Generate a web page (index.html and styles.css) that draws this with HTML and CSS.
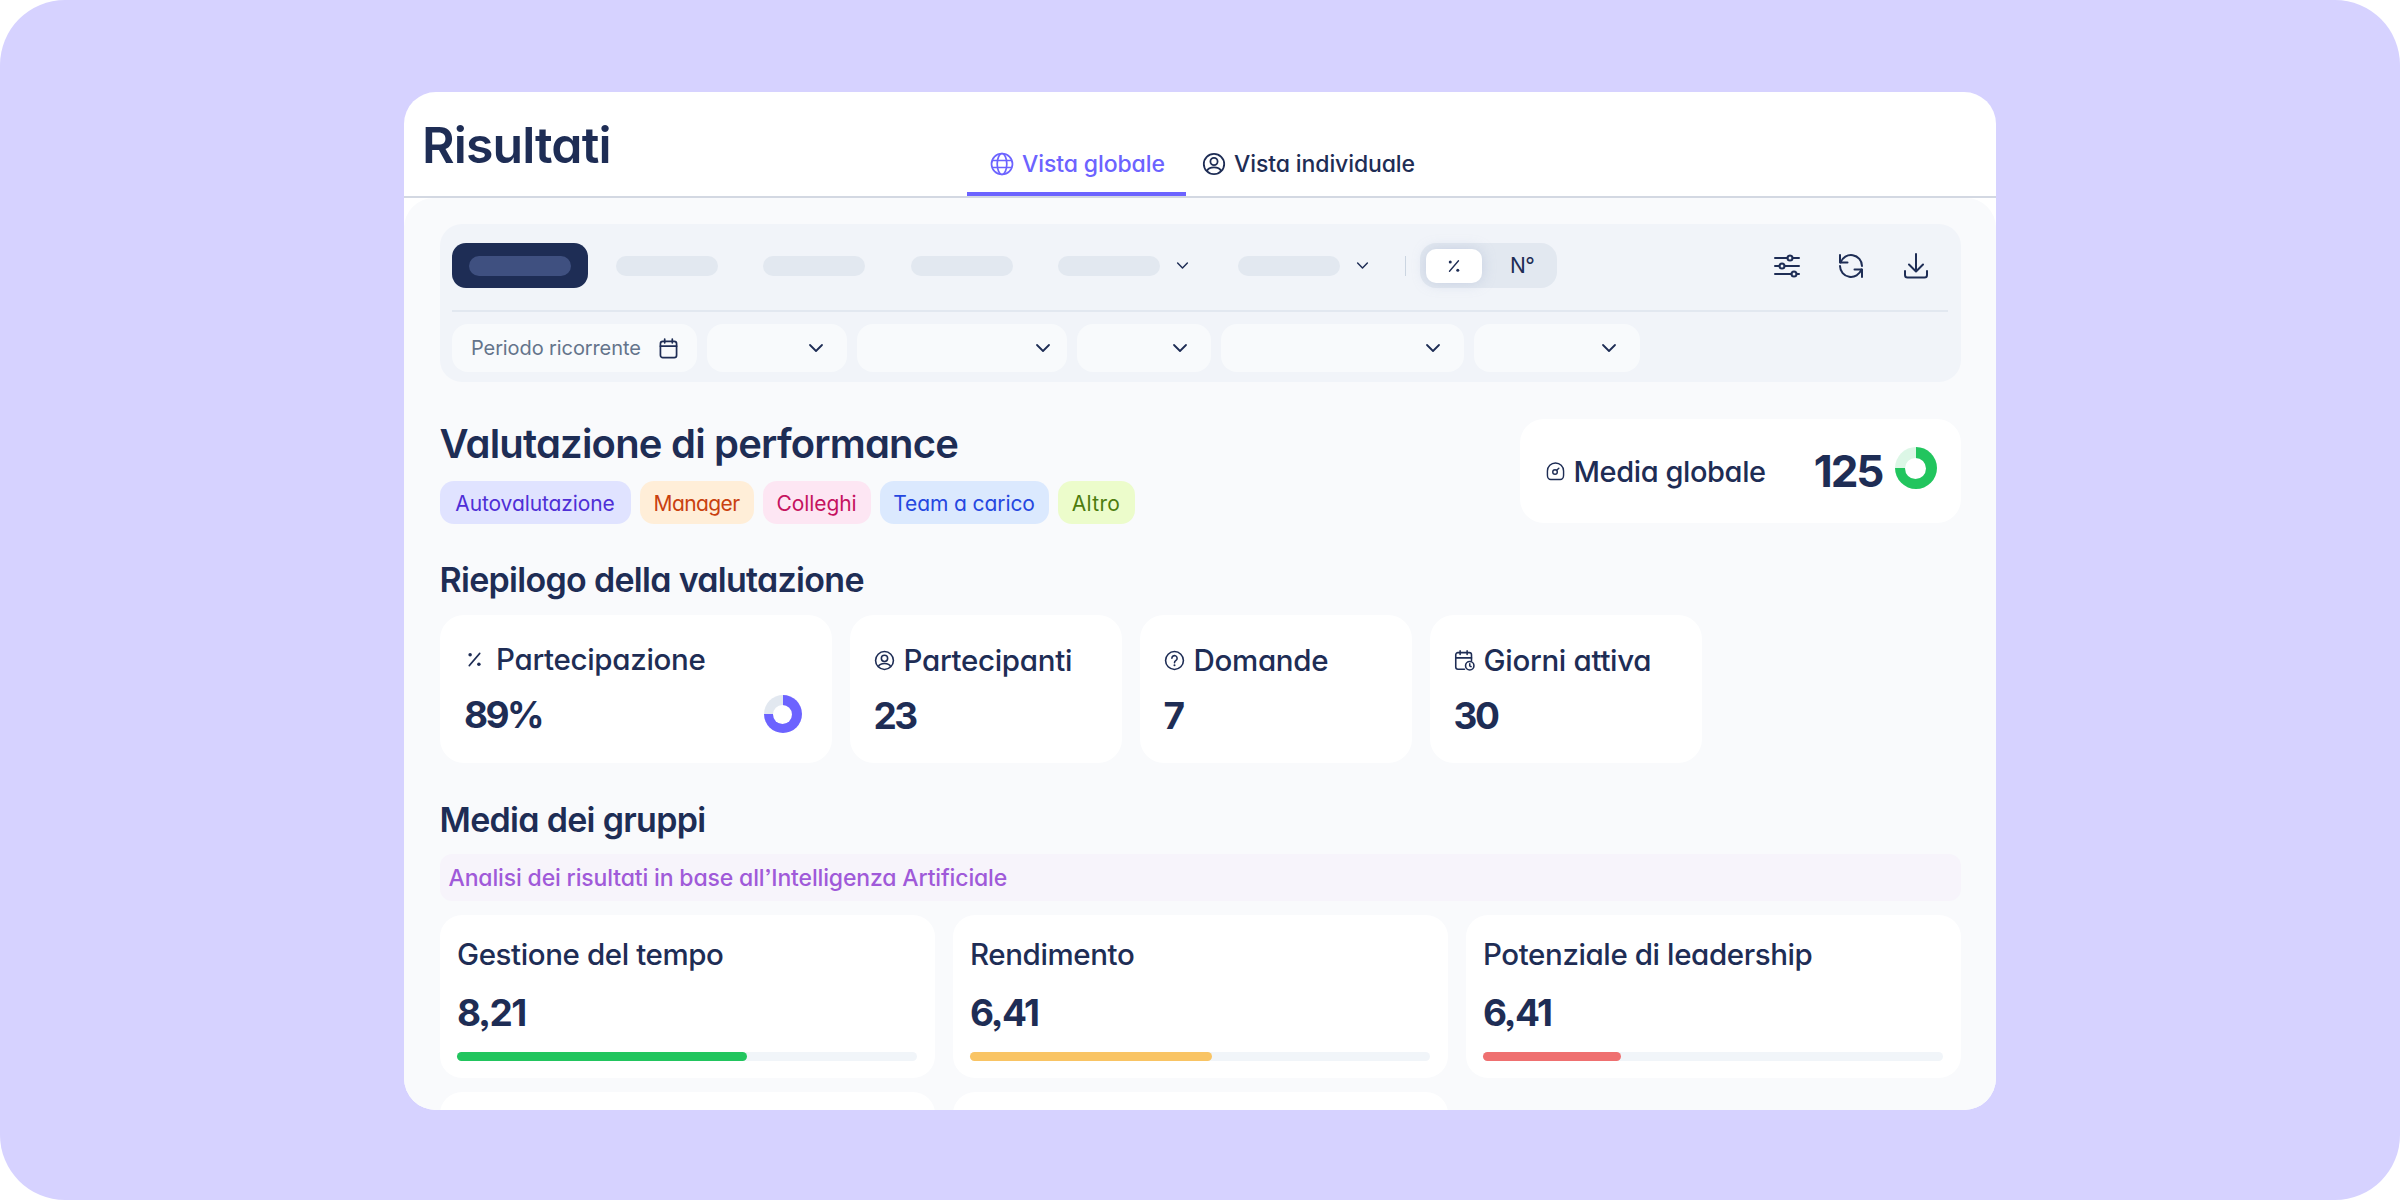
FILE: index.html
```html
<!DOCTYPE html>
<html lang="it">
<head>
<meta charset="utf-8">
<title>Risultati</title>
<link rel="stylesheet" href="styles.css">
</head>
<body>
<svg class="defs" width="0" height="0" aria-hidden="true">
  <symbol id="chev" viewBox="0 0 16 10"><path d="M2 2l6 6 6-6" fill="none" stroke="currentColor" stroke-width="1.8" stroke-linecap="round" stroke-linejoin="round"/></symbol>
  <symbol id="user" viewBox="0 0 24 24"><g fill="none" stroke="currentColor" stroke-width="1.8"><circle cx="12" cy="12" r="10.2"/><circle cx="12" cy="9.5" r="3.6"/><path d="M5 19c1-2.6 3.6-3.6 7-3.6s6 1 7 3.6"/></g></symbol>
  <symbol id="pct" viewBox="0 0 24 24"><path d="M18 5L6 19" stroke="currentColor" stroke-width="1.8" stroke-linecap="round"/><circle cx="7" cy="6.5" r="2" fill="currentColor"/><circle cx="17" cy="17.5" r="2" fill="currentColor"/></symbol>
</svg>
<main class="stage">
  <div class="window">
    <header class="top">
      <h1 class="page-title">Risultati</h1>
      <nav class="tabs">
        <a class="tab tab-active">
          <svg class="tab-icon" viewBox="0 0 24 24"><g fill="none" stroke="currentColor" stroke-width="1.7"><circle cx="12" cy="12" r="10.5"/><ellipse cx="12" cy="12" rx="4.8" ry="10.5"/><path d="M2.2 8.5h19.6M2.2 15.5h19.6"/></g></svg>
          Vista globale
        </a>
        <a class="tab tab-next">
          <svg class="tab-icon"><use href="#user"/></svg>
          Vista individuale
        </a>
      </nav>
    </header>
    <section class="content">
      <div class="panel">
        <div class="row-one">
          <div class="btn-dark"><span class="ph ph-dark"></span></div>
          <div class="seg"><span class="ph"></span></div>
          <div class="seg"><span class="ph"></span></div>
          <div class="seg"><span class="ph"></span></div>
          <div class="seg seg-wide"><span class="ph"></span><svg class="chev-s"><use href="#chev"/></svg></div>
          <div class="seg seg-last"><span class="ph"></span><svg class="chev-s"><use href="#chev"/></svg></div>
          <span class="vsep"></span>
          <div class="toggle">
            <span class="knob"><svg class="pct-icon"><use href="#pct"/></svg></span>
            <span class="toggle-n">N°</span>
          </div>
          <div class="tools">
            <svg class="tool" viewBox="0 0 26 26"><g fill="none" stroke="currentColor" stroke-width="2"><path d="M1 5h12.500M18.500 5h6.500M1 13h4.500M10.500 13h14.500M1 21h16.500M22.500 21h2.500" stroke-linecap="round"/><circle cx="16" cy="5" r="2.500"/><circle cx="8" cy="13" r="2.500"/><circle cx="20" cy="21" r="2.500"/></g></svg>
            <svg class="tool" viewBox="0 0 26 26"><g fill="none" stroke="currentColor" stroke-width="2" stroke-linecap="round" stroke-linejoin="round"><path d="M2.600 9.500A11 11 0 0 1 24 13"/><path d="M2 2v7.500h7.500"/><path d="M23.400 16.500A11 11 0 0 1 2 13"/><path d="M24 24v-7.500h-7.500"/></g></svg>
            <svg class="tool" viewBox="0 0 26 26"><g fill="none" stroke="currentColor" stroke-width="2" stroke-linecap="round" stroke-linejoin="round"><path d="M13 1v17M6 11.500l7 7 7-7"/><path d="M2 18v4a2.500 2.500 0 0 0 2.500 2.500h17A2.500 2.500 0 0 0 24 22v-4"/></g></svg>
          </div>
        </div>
        <div class="row-two">
          <div class="filter f-date">
            <span class="filter-text">Periodo ricorrente</span>
            <svg class="cal" viewBox="0 0 20 22"><g fill="none" stroke="currentColor" stroke-width="1.800" stroke-linecap="round"><rect x="1.500" y="3.500" width="17" height="17" rx="2.500"/><path d="M1.500 8.500h17M6 1v4M14 1v4"/></g></svg>
          </div>
          <div class="filter f-a"><svg class="chev"><use href="#chev"/></svg></div>
          <div class="filter f-b"><svg class="chev"><use href="#chev"/></svg></div>
          <div class="filter f-c"><svg class="chev"><use href="#chev"/></svg></div>
          <div class="filter f-d"><svg class="chev"><use href="#chev"/></svg></div>
          <div class="filter f-e"><svg class="chev"><use href="#chev"/></svg></div>
        </div>
      </div>

      <div class="eval-head">
        <div>
          <h2 class="eval-title">Valutazione di performance</h2>
          <div class="chips">
            <span class="chip chip-indigo">Autovalutazione</span>
            <span class="chip chip-orange">Manager</span>
            <span class="chip chip-pink">Colleghi</span>
            <span class="chip chip-blue">Team a carico</span>
            <span class="chip chip-lime">Altro</span>
          </div>
        </div>
        <div class="score">
          <svg class="score-icon" viewBox="0 0 20 20"><g fill="none" stroke="currentColor" stroke-width="1.500" stroke-linecap="round"><path d="M5 18.500h10c2 0 3.500-2 3.500-4.500V9.500a8.500 8.500 0 0 0-17 0V14c0 2.500 1.500 4.500 3.500 4.500z"/><circle cx="9.500" cy="10.500" r="2.400"/><path d="M11.500 8.500l2-2"/></g></svg>
          <span class="score-label">Media globale</span>
          <span class="score-value">125</span>
          <span class="donut donut-green"></span>
        </div>
      </div>

      <h2 class="section-title">Riepilogo della valutazione</h2>
      <div class="summary">
        <article class="stat stat-wide">
          <div class="stat-label stat-label-raised"><svg class="stat-icon"><use href="#pct"/></svg>Partecipazione</div>
          <div class="stat-foot"><span class="stat-value">89%</span><span class="donut donut-purple"></span></div>
        </article>
        <article class="stat">
          <div class="stat-label"><svg class="stat-icon"><use href="#user"/></svg>Partecipanti</div>
          <div class="stat-foot"><span class="stat-value">23</span></div>
        </article>
        <article class="stat">
          <div class="stat-label"><svg class="stat-icon" viewBox="0 0 24 24"><g fill="none" stroke="currentColor" stroke-width="1.800" stroke-linecap="round"><circle cx="12" cy="12" r="10.200"/><path d="M9 9.500a3 3 0 1 1 4.700 2.400c-1 .7-1.700 1.300-1.700 2.600"/></g><circle cx="12" cy="17.500" r="1.200" fill="currentColor"/></svg>Domande</div>
          <div class="stat-foot"><span class="stat-value">7</span></div>
        </article>
        <article class="stat">
          <div class="stat-label"><svg class="stat-icon" viewBox="0 0 24 24"><g fill="none" stroke="currentColor" stroke-width="1.800" stroke-linecap="round"><path d="M12 22H4.500A2.500 2.500 0 0 1 2 19.500v-14A2.500 2.500 0 0 1 4.500 3h13A2.500 2.500 0 0 1 20 5.500V12"/><path d="M2 9h18M7 1v4M15 1v4"/><circle cx="18" cy="18" r="4.800"/><path d="M18 15.800V18l1.500 1"/></g></svg>Giorni attiva</div>
          <div class="stat-foot"><span class="stat-value">30</span></div>
        </article>
      </div>

      <h2 class="section-title section-groups">Media dei gruppi</h2>
      <div class="ai-banner">Analisi dei risultati in base all’Intelligenza Artificiale</div>
      <div class="groups">
        <article class="group">
          <div class="group-label">Gestione del tempo</div>
          <div class="group-value">8,21</div>
          <div class="track"><div class="fill fill-green" style="width:63%"></div></div>
        </article>
        <article class="group">
          <div class="group-label">Rendimento</div>
          <div class="group-value">6,41</div>
          <div class="track"><div class="fill fill-yellow" style="width:52.600%"></div></div>
        </article>
        <article class="group">
          <div class="group-label">Potenziale di leadership</div>
          <div class="group-value">6,41</div>
          <div class="track"><div class="fill fill-red" style="width:30%"></div></div>
        </article>
        <article class="group"></article>
        <article class="group"></article>
      </div>
    </section>
  </div>
</main>
</body>
</html>
```

FILE: styles.css
```css
* { box-sizing: border-box; }
html, body { margin: 0; padding: 0; background: #fff; }
body {
  font-family: Inter, "Noto Sans", "Liberation Sans", sans-serif;
  font-feature-settings: "cv11" 1, "ss03" 1;
  color: #1e2d55;
}
.defs { position: absolute; }
h1, h2 { margin: 0; }
svg { display: block; flex: none; }

.stage {
  width: 2400px;
  height: 1200px;
  padding: 92px 404px 0 404px;
  background: #d6d2ff;
  border-radius: 65px;
  overflow: hidden;
}
.window {
  height: 1018px;
  background: #fff;
  border-radius: 32px;
  overflow: hidden;
}

/* header */
.top {
  height: 106px;
  display: flex;
  border-bottom: 2px solid #d3d8e2;
}
.page-title {
  width: 563px;
  padding: 23px 0 0 18px;
  font-size: 50px;
  line-height: 60px;
  font-weight: 600;
  letter-spacing: -0.9px;
}
.tabs { display: flex; height: 104px; }
.tab {
  display: flex;
  align-items: center;
  gap: 8px;
  height: 104px;
  padding-top: 40px;
  font-size: 23px;
  font-weight: 500;
  letter-spacing: -0.1px;
  white-space: nowrap;
}
.tab-active {
  width: 219px;
  padding-top: 44px;
  padding-left: 23px;
  color: #6c63ff;
  border-bottom: 4px solid #6c63ff;
}
.tab-next { padding-left: 16px; }
.tab-icon { width: 24px; height: 24px; }

/* content */
.content {
  height: 912px;
  padding: 26px 35.500px 0;
  background: #f9fafc;
  border-radius: 30px 30px 0 0;
}
.panel {
  height: 158px;
  padding: 20px 13px 9px 12.500px;
  background: #f1f4f9;
  border-radius: 22px;
}
.row-one {
  display: flex;
  align-items: center;
  height: 68px;
  padding-bottom: 23px;
  border-bottom: 2px solid #e2e8f0;
}
.btn-dark {
  width: 136px;
  height: 45px;
  margin-right: 28px;
  display: flex;
  align-items: center;
  justify-content: center;
  background: #1e2d55;
  border-radius: 14px;
}
.ph {
  display: block;
  width: 102px;
  height: 20px;
  background: #e2e8f0;
  border-radius: 10px;
}
.ph-dark { background: #3f5080; }
.seg { width: 147.400px; display: flex; align-items: center; }
.seg-wide { width: 180px; }
.seg-last { width: 167px; }
.chev-s { width: 13px; height: 9px; margin-left: 16px; color: #1e2d55; }
.vsep { width: 1px; height: 20px; background: #cbd5e1; }
.toggle {
  width: 137px;
  height: 45px;
  margin-left: 14px;
  padding: 6px;
  display: flex;
  align-items: center;
  background: #e2e8f0;
  border-radius: 16px;
}
.knob {
  width: 56px;
  height: 34px;
  display: flex;
  align-items: center;
  justify-content: center;
  background: #fff;
  border-radius: 10px;
  box-shadow: 0 0 14px rgba(148, 163, 200, .35);
}
.pct-icon { width: 18px; height: 18px; }
.toggle-n { flex: 1; padding-left: 11px; text-align: center; font-size: 21px; letter-spacing: -0.4px; }
.tools { margin-left: auto; padding-right: 19px; display: flex; gap: 38.500px; }
.tool { width: 26px; height: 26px; }

.row-two { display: flex; gap: 10px; margin-top: 12px; }
.filter {
  height: 48px;
  display: flex;
  align-items: center;
  justify-content: flex-end;
  padding-right: 23px;
  background: #f8fafc;
  border-radius: 16px;
}
.f-date { width: 245px; padding: 0 19px; justify-content: space-between; color: #64748b; }
.f-a { width: 139.500px; }
.f-b { width: 210px; padding-right: 16px; }
.f-c { width: 134px; }
.f-d { width: 243px; }
.f-e { width: 166px; }
.filter-text { font-size: 20px; letter-spacing: -0.1px; white-space: nowrap; }
.cal { width: 19px; height: 21px; color: #1e2d55; }
.chev { width: 16px; height: 10px; }

/* evaluation head */
.eval-head {
  display: flex;
  justify-content: space-between;
  margin-top: 37px;
}
.eval-title {
  padding-top: 1px;
  font-size: 40px;
  line-height: 48px;
  font-weight: 600;
  letter-spacing: -0.8px;
}
.chips { display: flex; gap: 9px; margin-top: 13px; }
.chip {
  height: 43px;
  padding-top: 2px;
  display: flex;
  align-items: center;
  justify-content: center;
  font-size: 21px;
  letter-spacing: -0.1px;
  border-radius: 14px;
}
.chip-indigo { width: 191px; background: #e0e3ff; color: #4f2fd6; }
.chip-orange { width: 114px; background: #ffeed8; color: #c9410f; letter-spacing: -0.6px; }
.chip-pink { width: 108px; background: #fde6f3; color: #c5135f; }
.chip-blue { width: 169px; background: #dbe9fe; color: #2547e0; }
.chip-lime { width: 77px; background: #ecfccb; color: #4d7c0f; letter-spacing: 0.3px; }

.score {
  width: 441px;
  height: 104px;
  padding: 0 24px 0 26px;
  display: flex;
  align-items: center;
  background: #fff;
  border-radius: 24px;
}
.score-icon { width: 19px; height: 19px; margin-right: 9px; }
.score-label { font-size: 29px; font-weight: 500; letter-spacing: -0.4px; }
.score-value {
  margin-left: auto;
  margin-right: 12px;
  font-size: 44px;
  font-weight: 700;
  letter-spacing: -2px;
}
.donut {
  display: block;
  position: relative;
  border-radius: 50%;
  flex: none;
}
.donut::after {
  content: "";
  position: absolute;
  inset: 25%;
  background: #fff;
  border-radius: 50%;
}
.donut-green {
  width: 42px;
  height: 42px;
  margin-bottom: 6px;
  background: conic-gradient(#22c55e 0 75%, #dcf7e6 75% 100%);
}
.donut-purple {
  width: 38px;
  height: 38px;
  background: conic-gradient(#6c63ff 0 75%, #e2e8f0 75% 100%);
}

.section-title {
  margin-top: 36px;
  font-size: 34px;
  line-height: 40px;
  font-weight: 600;
  letter-spacing: -0.7px;
}
.summary { display: flex; gap: 18px; margin-top: 15px; }
.stat {
  width: 272px;
  height: 148px;
  padding: 27px 24px 0;
  background: #fff;
  border-radius: 24px;
}
.stat-wide { width: 392px; padding-left: 24.500px; }
.stat-label {
  display: flex;
  align-items: center;
  gap: 9px;
  height: 36px;
  font-size: 29.500px;
  font-weight: 500;
  letter-spacing: -0.3px;
  white-space: nowrap;
}
.stat-label-raised { gap: 11px; margin-top: -1px; margin-bottom: 1px; }
.stat-icon { width: 21px; height: 21px; }
.stat-foot {
  display: flex;
  align-items: center;
  justify-content: space-between;
  height: 46px;
  margin-top: 14px;
}
.stat-value { font-size: 37px; font-weight: 700; letter-spacing: -2.5px; }
.stat-wide .stat-foot { padding-right: 6px; }

.section-groups { margin-top: 37px; }
.ai-banner {
  height: 47px;
  margin-top: 14px;
  padding-left: 9px;
  display: flex;
  align-items: center;
  background: #f7f4fb;
  border-radius: 12px;
  color: #a05ad9;
  font-size: 23px;
  font-weight: 500;
  letter-spacing: -0.15px;
}
.groups {
  display: grid;
  grid-template-columns: repeat(3, 1fr);
  gap: 14px 18px;
  margin-top: 14px;
}
.group {
  height: 163px;
  padding: 21px 17.500px 0;
  background: #fff;
  border-radius: 22px;
}
.group-label {
  height: 36px;
  line-height: 36px;
  font-size: 29.500px;
  font-weight: 500;
  letter-spacing: -0.4px;
}
.group-value {
  height: 46px;
  margin-top: 18px;
  line-height: 46px;
  font-size: 37px;
  font-weight: 700;
  letter-spacing: -1.6px;
}
.track {
  height: 9px;
  margin-top: 16px;
  background: #f1f5f9;
  border-radius: 5px;
}
.fill { height: 100%; border-radius: 5px; }
.fill-green { background: #22c55e; }
.fill-yellow { background: #f9c464; }
.fill-red { background: #ef7070; }
```
